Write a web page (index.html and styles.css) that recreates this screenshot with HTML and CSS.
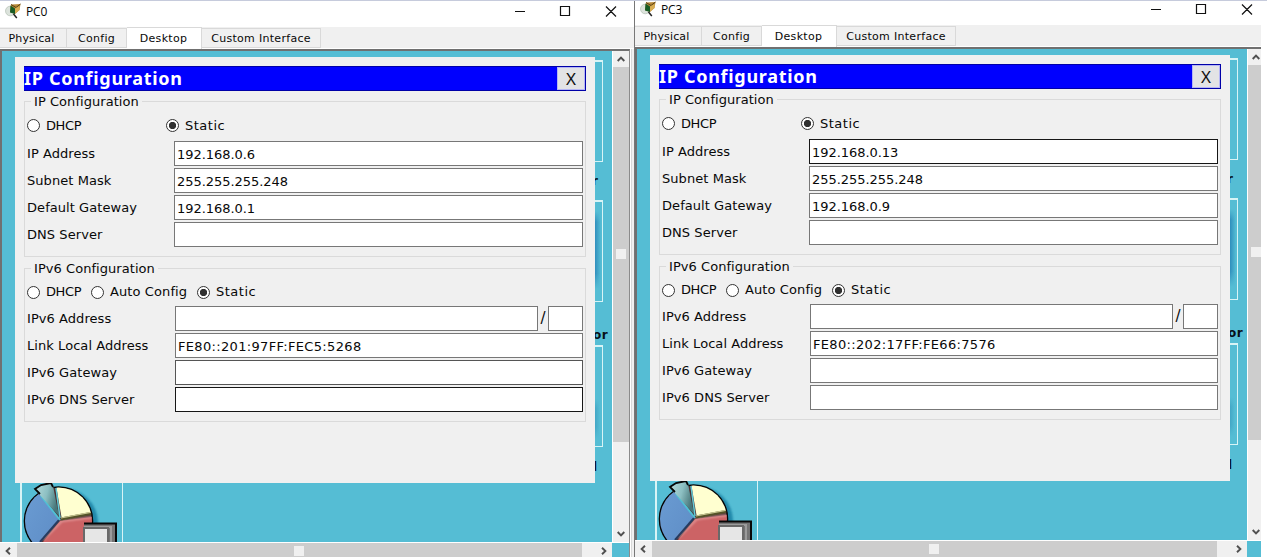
FILE: index.html
```
<!DOCTYPE html>
<html lang="en">
<head>
<meta charset="utf-8">
<title>IP Configuration</title>
<link rel="stylesheet" href="styles.css">
</head>
<body>
<svg class="defs" width="0" height="0" aria-hidden="true">
  <defs>
    <filter id="soft" x="-20%" y="-20%" width="140%" height="140%"><feGaussianBlur stdDeviation="1.3"/></filter>
    <linearGradient id="cone" x1="0" y1="0" x2="1" y2="0.4"><stop offset="0" stop-color="#b9dede"/><stop offset=".55" stop-color="#8cbfc2"/><stop offset="1" stop-color="#47777a"/></linearGradient>
    <linearGradient id="blue" x1="0" y1="0" x2="1" y2="0.7"><stop offset="0" stop-color="#b9d0f0"/><stop offset=".3" stop-color="#6899d0"/><stop offset="1" stop-color="#608fc8"/></linearGradient>
    <clipPath id="disc"><circle cx="38.5" cy="38" r="33.5"/></clipPath>
  </defs>
  <symbol id="app" viewBox="0 0 17 16">
    <ellipse cx="5.2" cy="8" rx="4.7" ry="4.8" fill="#dce3dc" stroke="#b5c0b5" stroke-width=".7"/>
    <path d="M6 1.500 15.500 1 14.500 7 10 11 5 9z" fill="#b98a38"/>
    <path d="M6 1.500 11 4.500 15.500 1" fill="none" stroke="#574016" stroke-width="1"/>
    <path d="M5.500 2.500 10 5.500V11L5 9.500z" fill="#185c25"/>
    <path d="M10 5.500 14.500 3V7L10 10.500z" fill="#d9ae52"/>
    <path d="M8.500 11 11.800 15" stroke="#222" stroke-width="1.500"/>
  </symbol>
  <symbol id="controls" viewBox="0 0 110 20">
    <path d="M5 11.500H15M50.500 6.500h9v9h-9zM96 6.500l10 10M106 6.500l-10 10" fill="none" stroke="#111" stroke-width="1.200"/>
  </symbol>
  <symbol id="pie" viewBox="0 0 100 62">
    <ellipse cx="42" cy="40" rx="36" ry="35" fill="#2389aa" filter="url(#soft)"/>
    <circle cx="38.500" cy="38" r="34" fill="#4d3334" stroke="#050505" stroke-width="1.600"/>
    <g clip-path="url(#disc)">
      <path d="M39 37 20 60-2 60V8L20 8z" fill="url(#blue)"/>
      <path d="M42 37 36 2H80V29z" fill="#ffffd0"/>
      <path d="M40 38 80 33V64H19z" fill="#cc6365"/>
      <path d="M23 57 42 38 74 34" fill="none" stroke="#e8a5a6" stroke-width="1.500" filter="url(#soft)"/>
      <path d="M39 37 20 59" stroke="#263c60" stroke-width="2"/>
      <path d="M41 36 73 30" stroke="#555329" stroke-width="3"/>
      <path d="M41 35 73 29" stroke="#c8c792" stroke-width="1.200"/>
      <path d="M40 37 21 13" stroke="#4fc0d4" stroke-width="2"/>
    </g>
    <path d="M15 6 32-2 39 33 19 11z" fill="url(#cone)"/>
    <path d="M20 11 15 6 21 2 31 0 33 4" fill="none" stroke="#060606" stroke-width="1.800"/>
    <path d="M36 5 40 35" stroke="#62cbd8" stroke-width="1.500"/>
    <path d="M64 62V40H96V62z" fill="#747474"/>
    <path d="M64 40.500H96V62" fill="none" stroke="#080808" stroke-width="2"/>
    <path d="M64 44H91V62" fill="none" stroke="#9b9b9b" stroke-width="2"/>
    <path d="M64 45H88V62H64z" fill="#e6e6e6" stroke="#696969" stroke-width="2"/>
  </symbol>
  <symbol id="up" viewBox="0 0 8 6"><path d="M.7 5 4 1.600 7.300 5" fill="none" stroke="#505050" stroke-width="1.900"/></symbol>
</svg>

<main class="screen">
  <section class="window">
    <header class="titlebar"><svg class="app"><use href="#app"/></svg><span class="name">PC0</span><svg class="controls"><use href="#controls"/></svg></header>
    <nav class="tabs"><span class="tab t1"><b>Physical</b></span><span class="tab t2"><b>Config</b></span><span class="tab active"><b>Desktop</b></span><span class="tab t4"><b>Custom Interface</b></span></nav>
    <div class="body">
      <div class="view">
        <div class="desk">
          <i class="tile one"></i><i class="tile two"></i><i class="tile three"></i><i class="tile pie"><svg><use href="#pie"/></svg></i>
          <span class="cap c1">r</span><span class="cap c2">or</span><span class="cap c3">l</span>
          <div class="dialog">
            <div class="heading"><h1>IP Configuration</h1><button>X</button></div>
            <section class="group v4">
              <h2>IP Configuration</h2>
              <div class="radios"><i class="radio"></i><span class="dhcp">DHCP</span><i class="radio on"></i><span class="static">Static</span></div>
              <div class="row"><label>IP Address</label><div class="field">192.168.0.6</div></div>
              <div class="row"><label>Subnet Mask</label><div class="field">255.255.255.248</div></div>
              <div class="row"><label>Default Gateway</label><div class="field">192.168.0.1</div></div>
              <div class="row"><label>DNS Server</label><div class="field"></div></div>
            </section>
            <section class="group v6">
              <h2>IPv6 Configuration</h2>
              <div class="radios"><i class="radio"></i><span class="dhcp">DHCP</span><i class="radio"></i><span class="auto">Auto Config</span><i class="radio on"></i><span class="static">Static</span></div>
              <div class="row"><label>IPv6 Address</label><div class="field"></div><span class="slash">/</span><div class="field prefix"></div></div>
              <div class="row"><label>Link Local Address</label><div class="field">FE80::201:97FF:FEC5:5268</div></div>
              <div class="row"><label>IPv6 Gateway</label><div class="field mid"></div></div>
              <div class="row"><label>IPv6 DNS Server</label><div class="field dark"></div></div>
            </section>
          </div>
        </div>
        <div class="vscroll"><div class="btn"><svg class="arrow"><use href="#up"/></svg></div><div class="vthumb"><i class="grip"></i></div><div class="rest"></div><div class="btn"><svg class="arrow down"><use href="#up"/></svg></div></div>
      </div>
      <div class="hscroll"><div class="btn"><svg class="arrow left"><use href="#up"/></svg></div><div class="hthumb"><i class="grip"></i></div><div class="btn end"><svg class="arrow right"><use href="#up"/></svg></div><i class="corner"></i></div>
    </div>
  </section>

  <section class="window second">
    <header class="titlebar"><svg class="app"><use href="#app"/></svg><span class="name">PC3</span><svg class="controls"><use href="#controls"/></svg></header>
    <nav class="tabs"><span class="tab t1"><b>Physical</b></span><span class="tab t2"><b>Config</b></span><span class="tab active"><b>Desktop</b></span><span class="tab t4"><b>Custom Interface</b></span></nav>
    <div class="body">
      <div class="view">
        <div class="desk">
          <i class="tile one"></i><i class="tile two"></i><i class="tile three"></i><i class="tile pie"><svg><use href="#pie"/></svg></i>
          <span class="cap c1">r</span><span class="cap c2">or</span><span class="cap c3">l</span>
          <div class="dialog">
            <div class="heading"><h1>IP Configuration</h1><button>X</button></div>
            <section class="group v4">
              <h2>IP Configuration</h2>
              <div class="radios"><i class="radio"></i><span class="dhcp">DHCP</span><i class="radio on"></i><span class="static">Static</span></div>
              <div class="row"><label>IP Address</label><div class="field dark">192.168.0.13</div></div>
              <div class="row"><label>Subnet Mask</label><div class="field">255.255.255.248</div></div>
              <div class="row"><label>Default Gateway</label><div class="field">192.168.0.9</div></div>
              <div class="row"><label>DNS Server</label><div class="field"></div></div>
            </section>
            <section class="group v6">
              <h2>IPv6 Configuration</h2>
              <div class="radios"><i class="radio"></i><span class="dhcp">DHCP</span><i class="radio"></i><span class="auto">Auto Config</span><i class="radio on"></i><span class="static">Static</span></div>
              <div class="row"><label>IPv6 Address</label><div class="field"></div><span class="slash">/</span><div class="field prefix"></div></div>
              <div class="row"><label>Link Local Address</label><div class="field">FE80::202:17FF:FE66:7576</div></div>
              <div class="row"><label>IPv6 Gateway</label><div class="field"></div></div>
              <div class="row"><label>IPv6 DNS Server</label><div class="field"></div></div>
            </section>
          </div>
        </div>
        <div class="vscroll"><div class="btn"><svg class="arrow"><use href="#up"/></svg></div><div class="vthumb"><i class="grip"></i></div><div class="rest"></div><div class="btn"><svg class="arrow down"><use href="#up"/></svg></div></div>
      </div>
      <div class="hscroll"><div class="btn"><svg class="arrow left"><use href="#up"/></svg></div><div class="hthumb"><i class="grip"></i></div><div class="btn end"><svg class="arrow right"><use href="#up"/></svg></div><i class="corner"></i></div>
    </div>
  </section>
</main>
</body>
</html>
```
FILE: styles.css
```
* { box-sizing: border-box; }
body { margin: 0; background: #fff; color: #080808; font: 13px/16px Verdana, "DejaVu Sans", sans-serif; }
.defs { position: absolute; }
.screen { display: flex; width: 1267px; padding-right: 6px; height: 557px; overflow: hidden; position: relative; background: #fff; align-items: flex-start; }
.screen::before { content: ""; position: absolute; z-index: 9; left: 0; top: 0; width: 1267px; height: 1px; background: #c6cbdc; }
.window { flex: none; width: 635px; height: 559px; background: #f0f0f0; display: flex; flex-direction: column; }
.second { width: 626px; overflow: hidden; margin-top: -2px; box-shadow: -1px 0 #777; }
.second > * { min-width: 626px; }
.second .controls { margin-right: 5px; }
.window:first-child .titlebar { border-right: 1px solid #f4f4f4; }

.titlebar { flex: none; height: 27px; background: #fff; display: flex; align-items: flex-start; padding-left: 5px; }
.app { width: 17px; height: 16px; margin-top: 3px; flex: none; }
.name { font: 12px/16px "Open Sans", "Noto Sans", sans-serif; margin: 4px 0 0 4px; flex: 1; letter-spacing: -.2px; }
.controls { width: 110px; height: 20px; margin-right: 14px; flex: none; }

.tabs { flex: none; height: 22px; display: flex; align-items: flex-end; border-bottom: 1px solid #fff; font-size: 11px; line-height: 20px; }
.tab { height: 20px; border: 1px solid #d9d9d9; border-left: 0; text-align: center; white-space: nowrap; letter-spacing: .15px; }
.tab b { font-weight: normal; }
.t1 { width: 67px; padding-right: 3px; }
.t2 { width: 60px; letter-spacing: .3px; }
.active { height: 22px; width: 75px; background: #fff; border-bottom: 0; margin-bottom: -1px; padding-right: 1px; letter-spacing: .3px; line-height: 21px; }
.t4 { width: 119px; letter-spacing: .3px; }

.body { flex: none; width: 630px; height: 510px; border: 2px solid #707070; border-right: 1px solid #8b8b8b; border-bottom: 0; box-shadow: 1px 0 #fff, 2px 0 #d9d9d9; }
.view { display: flex; height: 491px; }
.desk { position: relative; width: 610px; height: 491px; background: #55bdd4; overflow: hidden; padding: 6px 0 0 13px; }
.tile { position: absolute; border: 1px solid #d8f4f6; border-top-width: 2px; width: 102px; height: 102px; left: 499px; }
.one { top: 9px; }
.two { top: 149px; background: linear-gradient(180deg, #55bdd4 0, #55bdd400 14%, #55bdd400 80%, #55bdd4 100%) 0 9px / 100% 78px no-repeat, linear-gradient(90deg, #237fb5 91%, #55bdd4 99%) 0 9px / 100% 78px no-repeat; }
.three { top: 294px; background: linear-gradient(180deg, #55bdd4 0, #55bdd400 24%, #55bdd400 70%, #55bdd4 100%) 0 52px / 100% 40px no-repeat, linear-gradient(90deg, #3799bd 90%, #55bdd4 98%) 0 52px / 100% 40px no-repeat; }
.pie { left: 18px; top: 400px; width: 103px; height: 120px; border-left-width: 2px; }
.pie svg { position: absolute; left: -2px; top: 30px; width: 100px; height: 62px; }
.cap { position: absolute; font: bold 12px/16px "DejaVu Sans", sans-serif; color: #081018; white-space: nowrap; }
.c1 { left: 590px; top: 122px; }
.c2 { left: 591px; top: 276px; letter-spacing: .4px; }
.c3 { left: 591px; top: 408px; }

.dialog { position: relative; width: 580px; height: 426px; background: #f0f0f0; padding: 9px 9px 0; }
.heading { height: 25px; background: #0000fe; display: flex; justify-content: space-between; border: 1px solid #0000a8; border-left: 0; }
h1 { margin: 0; color: #fff; font: bold 18px/23px "Noto Sans", sans-serif; letter-spacing: .7px; }
button { width: 28px; height: 23px; padding: 0; border: 1px solid #b5b5f5; background: #e3e3e5; font: 17px/18px "Noto Sans", sans-serif; color: #111; }

.group { border: 1px solid #dadada; position: relative; padding-left: 2px; }
.v4 { margin-top: 10px; height: 156px; }
.v6 { margin-top: 11px; height: 154px; }
h2 { position: absolute; left: 6px; top: -8px; margin: 0; padding: 0 3px; background: #f0f0f0; font-weight: normal; font-size: 13px; line-height: 16px; white-space: nowrap; letter-spacing: .05px; }
.radios { display: flex; align-items: center; height: 24px; margin-top: 12px; margin-bottom: 3px; white-space: nowrap; }
.v4 .radio { margin-top: -1px; }
.v6 .radios { height: 22px; margin-bottom: 3px; }
.radio { flex: none; width: 13px; height: 13px; border: 1px solid #333; border-radius: 50%; background: #fff; margin-right: 6px; }
.on { background: radial-gradient(circle, #303030 0 3.300px, #fff 4px); }
.dhcp { width: 120px; letter-spacing: -.4px; }
.static { letter-spacing: .5px; }
.v6 .dhcp { width: 45px; }
.auto { width: 87px; letter-spacing: .1px; }
.row { display: flex; height: 25px; margin-bottom: 2px; padding-right: 2px; }
label { width: 147px; flex: none; line-height: 25px; white-space: nowrap; letter-spacing: .06px; }
.v6 label { width: 148px; }
.field { flex: 1; height: 25px; background: #fff; border: 1px solid #777; padding-left: 2px; line-height: 26px; white-space: nowrap; letter-spacing: -.05px; }
.v6 .field { letter-spacing: .33px; }
.mid { border-color: #555; }
.dark { border-color: #161616; }
.slash { width: 10px; text-align: center; line-height: 25px; font-size: 15px; }
.v6 .prefix { flex: none; width: 35px; }

.vscroll { width: 17px; display: flex; flex-direction: column; background: #f0f0f0; border-left: 1px solid #fff; }
.vscroll, .hscroll { flex: none; }
.btn { flex: none; width: 16px; height: 16px; display: flex; align-items: center; justify-content: center; }
.arrow { width: 8px; height: 6px; }
.down { transform: rotate(180deg); }
.left { transform: rotate(-90deg); }
.right { transform: rotate(90deg); }
.vthumb { height: 375px; background: #cdcdcd; display: flex; align-items: center; justify-content: center; padding-bottom: 1px; }
.rest { flex: 1; }
.grip { width: 10px; height: 10px; background: #f0f0f0; }
.hscroll { height: 17px; width: 629px; margin-left: -2px; display: flex; background: #f0f0f0; border-top: 1px solid #fff; }
.hscroll .btn { width: 17px; height: 15px; padding-right: 1px; }
.hthumb { width: 565px; background: #cdcdcd; display: flex; align-items: center; justify-content: center; padding: 0 2px 1px 0; }
.hscroll .end { width: 30px; padding: 0 0 0 13px; }
.corner { flex: 1; background: #55bdd4; }
```
